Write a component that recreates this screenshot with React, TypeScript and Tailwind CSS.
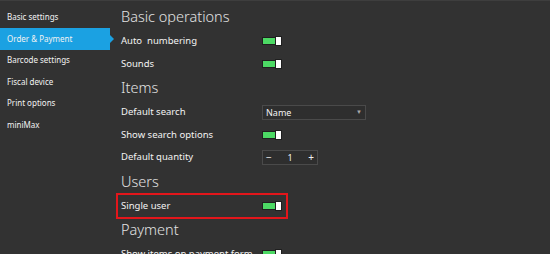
import type { ReactNode } from 'react';

const menu = ['Basic settings', 'Order & Payment', 'Barcode settings', 'Fiscal device', 'Print options', 'miniMax'];

const Toggle = () => (
  <div className="flex items-center w-[21px] h-[10px]">
    <div className="w-[14px] h-[8px] bg-[#4cd964] border border-[#1f1f1f]" />
    <div className="w-[7px] h-[10px] bg-white border border-[#1f1f1f] -ml-px" />
  </div>
);

const Header = ({ children }: { children: ReactNode }) => (
  <div className="h-[26px] flex items-center text-[14.5px] font-light text-[#e2e2e2]">{children}</div>
);

const Row = ({ label, children }: { label: string; children?: ReactNode }) => (
  <div className="h-[22.5px] flex items-center">
    <div className="w-[141px] text-[9.5px] text-[#f2f2f2] whitespace-pre">{label}</div>
    {children}
  </div>
);

export default function App() {
  return (
    <div
      className="w-[550px] h-[254px] bg-[#323232] overflow-hidden flex border-t border-[#3e3e3e]"
      style={{ fontFamily: '"Noto Sans", "Open Sans", sans-serif' }}
    >
      <div className="w-[110px] pt-[5.5px] shrink-0">
        {menu.map((item, i) => (
          <div
            key={item}
            className={`relative h-[21.5px] flex items-center pl-[7px] text-[8px] text-[#f2f2f2] ${i === 1 ? 'bg-[#1ba1e2]' : ''}`}
          >
            {item}
            {i === 1 && (
              <div className="absolute right-[-4px] top-1/2 -translate-y-1/2 w-0 h-0 border-y-[4px] border-y-transparent border-l-[4px] border-l-[#1ba1e2]" />
            )}
          </div>
        ))}
      </div>

      <div className="pl-[11px] pt-[3px] flex-1">
        <Header>Basic operations</Header>
        <Row label="Auto  numbering">
          <Toggle />
        </Row>
        <Row label="Sounds">
          <Toggle />
        </Row>

        <Header>Items</Header>
        <Row label="Default search">
          <div className="w-[104px] h-[15px] border border-[#4a4a4a] bg-[#2e2e2e] flex items-center justify-between px-[3px] text-[9px] text-[#f2f2f2]">
            <span>Name</span>
            <span className="text-[6px] text-[#aaaaaa]">▼</span>
          </div>
        </Row>
        <Row label="Show search options">
          <Toggle />
        </Row>
        <Row label="Default quantity">
          <div className="w-[56px] h-[15px] border border-[#4a4a4a] bg-[#2e2e2e] flex items-center justify-between px-[3px] text-[10px] text-[#f2f2f2]">
            <span className="leading-none">−</span>
            <span className="text-[9px]">1</span>
            <span className="leading-none">+</span>
          </div>
        </Row>

        <Header>Users</Header>
        <div className="w-[172px] h-[26px] -ml-[5px] my-[-1.75px] pl-[3px] border-2 border-[#e3161b] flex items-center">
          <div className="w-[141px] text-[9.5px] text-[#f2f2f2]">Single user</div>
          <Toggle />
        </div>

        <Header>Payment</Header>
        <Row label="Show items on payment form">
          <Toggle />
        </Row>
      </div>
    </div>
  );
}
